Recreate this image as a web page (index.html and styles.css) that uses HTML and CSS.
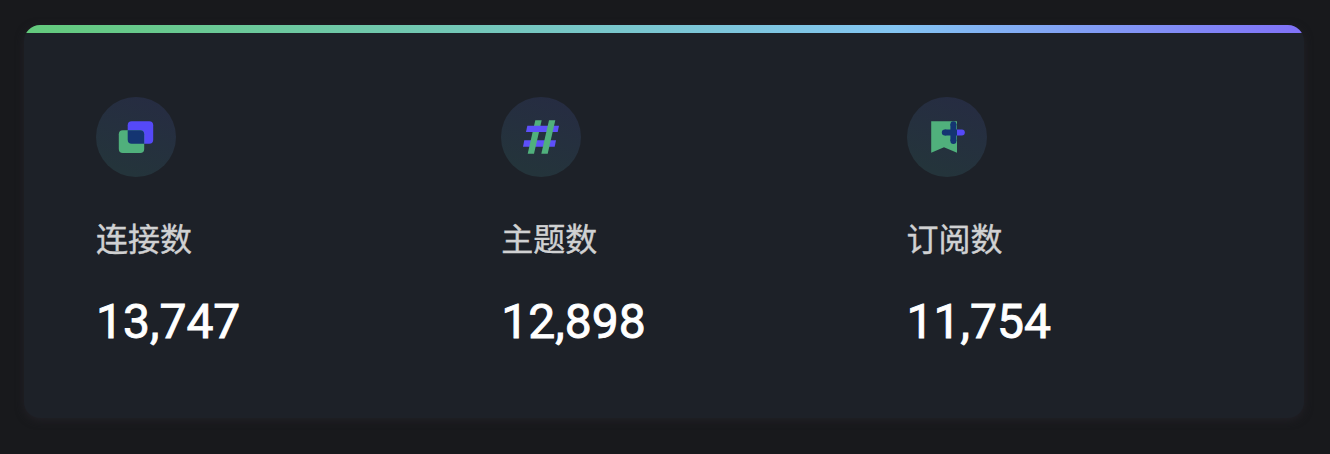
FILE: index.html
```html
<!DOCTYPE html>
<html lang="zh-CN">
<head>
<meta charset="UTF-8">
<title>概览</title>
<link rel="stylesheet" href="styles.css">
</head>
<body>
<main class="card">
  <section class="metric">
    <div class="icon"><svg width="80" height="80" viewBox="0 0 80 80"><rect x="31.7" y="24.2" width="25.5" height="22.5" rx="4" fill="#5549f8"/><rect x="22.8" y="33.3" width="25.4" height="22.7" rx="4" fill="#50b07c"/><path d="M31.7 33.3H44.2a4 4 0 0 1 4 4V46.7H35.7a4 4 0 0 1-4-4Z" fill="#143572"/></svg></div>
    <div class="label">连接数</div>
    <div class="value">13,747</div>
  </section>
  <section class="metric">
    <div class="icon"><svg width="80" height="80" viewBox="0 0 80 80"><path d="M23.3 43.3H55L53.7 49.8H22Z" fill="#5d50fa"/><path d="M34.3 23.3H40.7L33 56.7H26.7Z" fill="#50b07c"/><path d="M26.3 28.7H58L56.7 35H25Z" fill="#5d50fa"/><path d="M48 23.3H54.3L46.7 56.7H40.3Z" fill="#50b07c"/></svg></div>
    <div class="label">主题数</div>
    <div class="value">12,898</div>
  </section>
  <section class="metric">
    <div class="icon"><svg width="80" height="80" viewBox="0 0 80 80"><path d="M24.2 24.2H50V55.8L37 50.2L24.2 55.8Z" fill="#50b07c"/><path d="M50 32.5H54.8a3 3 0 0 1 0 6H50Z" fill="#5549f8"/><path d="M46.4 27.2V44M37.8 35.5H50" fill="none" stroke="#143572" stroke-width="6"/><circle cx="46.4" cy="27.2" r="3" fill="#143572"/><circle cx="46.4" cy="44" r="3" fill="#143572"/><circle cx="37.8" cy="35.5" r="3" fill="#143572"/></svg></div>
    <div class="label">订阅数</div>
    <div class="value">11,754</div>
  </section>
</main>
</body>
</html>
```
FILE: styles.css
```css
* { box-sizing: border-box; }
body { margin: 0; padding: 25px 26px 34px 24px; height: 454px; background: #18191c; font-family: Roboto, "Noto Sans CJK SC", sans-serif; }
.card { height: 393px; border-radius: 16px; background: linear-gradient(90deg, #63ca7c, #83c5f2 68%, #8071f8) top / 100% 8px no-repeat, #1d2128; padding: 72px 0 0 72px; display: grid; grid-template-columns: repeat(3, 405.3px); box-shadow: 0 2px 8px #222127; overflow: hidden; }
.icon { width: 80px; height: 80px; border-radius: 50%; background: linear-gradient(200deg, #262c42 8%, #24343b 85%); }
.icon svg { display: block; }
.label { margin-top: 39px; font-size: 32px; line-height: 48px; color: #d0d1d2; -webkit-text-stroke: .4px #d0d1d2; }
.value { margin-top: 30px; font-size: 48px; line-height: 56px; font-weight: 400; color: #fff; -webkit-text-stroke: .9px #fff; }
```
